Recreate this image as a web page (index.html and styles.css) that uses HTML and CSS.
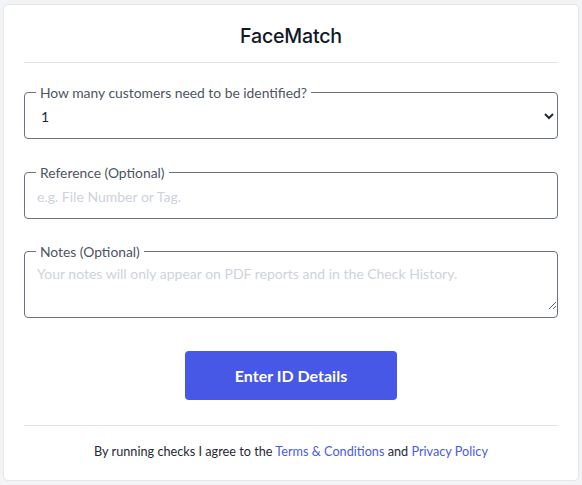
FILE: index.html
```html
<!DOCTYPE html>
<html lang="en">
<head>
<meta charset="utf-8">
<title>FaceMatch</title>
<link rel="stylesheet" href="styles.css">
</head>
<body>
<div class="card">
  <h1 class="title">FaceMatch</h1>
  <hr class="divider">
  <form class="form">
    <fieldset class="field">
      <legend class="legend">How many customers need to be identified?</legend>
      <select class="control select">
        <option>1</option>
        <option>2</option>
        <option>3</option>
      </select>
    </fieldset>
    <fieldset class="field">
      <legend class="legend">Reference (Optional)</legend>
      <input class="control" type="text" placeholder="e.g. File Number or Tag.">
    </fieldset>
    <fieldset class="field notes">
      <legend class="legend">Notes (Optional)</legend>
      <textarea class="control textarea" placeholder="Your notes will only appear on PDF reports and in the Check History."></textarea>
    </fieldset>
    <div class="actions">
      <button type="button" class="btn">Enter ID Details</button>
    </div>
  </form>
  <hr class="divider bottom">
  <p class="terms">By running checks I agree to the <a href="#" class="link">Terms &amp; Conditions</a> and <a href="#" class="link">Privacy Policy</a></p>
</div>
</body>
</html>
```

FILE: styles.css
```css
* { box-sizing: border-box; }
html, body { margin: 0; }
body {
  background: #f3f4f6;
  padding: 4px 3px 4px 3px;
  font-family: Lato, "Liberation Sans", sans-serif;
  color: #1f2937;
}
.card {
  width: 576px;
  height: 477px;
  background: #fff;
  border: 1px solid #e5e7eb;
  border-radius: 5px;
  padding: 19px 20px 0 20px;
}
.title {
  margin: 0;
  text-align: center;
  font-family: Inter, "Noto Sans", sans-serif;
  font-weight: 500;
  font-size: 19.6px;
  line-height: 24px;
  color: #111827;
  letter-spacing: -0.2px;
}
.divider {
  border: 0;
  border-top: 1px solid #e2e4ea;
  margin: 14px 0 0 0;
}
.form {
  display: flex;
  flex-direction: column;
  gap: 25px;
  margin-top: 21px;
}
.field {
  margin: 0;
  padding: 0 0 7px 0;
  border: 1px solid #6b7280;
  border-radius: 4px;
  min-width: 0;
}
.field.notes { margin-top: -1px; }
.legend {
  margin-left: 11px;
  padding: 0 4px;
  font-size: 13.85px;
  line-height: 17px;
  color: #4b5563;
}
.control {
  display: block;
  width: 100%;
  height: 30px;
  border: 0;
  outline: none;
  background: transparent;
  padding: 0 12px;
  font-family: Lato, "Liberation Sans", sans-serif;
  font-size: 14px;
  color: #1f2937;
}
.select {
  padding: 0 8px 0 12px;
}
.control::placeholder { color: #cdd3dc; }
.textarea {
  height: 50px;
  padding-top: 5px;
  line-height: 17px;
  resize: vertical;
}
.actions {
  display: flex;
  justify-content: center;
  margin-top: 8px;
}
.btn {
  width: 212px;
  height: 49px;
  border: 0;
  border-radius: 4px;
  background: #4757e6;
  color: #fff;
  font-family: Lato, "Liberation Sans", sans-serif;
  font-weight: 700;
  font-size: 16px;
}
.divider.bottom { margin-top: 25px; }
.terms {
  margin: 17px 0 0 0;
  text-align: center;
  font-size: 12.7px;
  line-height: 17px;
  color: #1f2937;
}
.link {
  color: #4a5be6;
  text-decoration: none;
}
```
